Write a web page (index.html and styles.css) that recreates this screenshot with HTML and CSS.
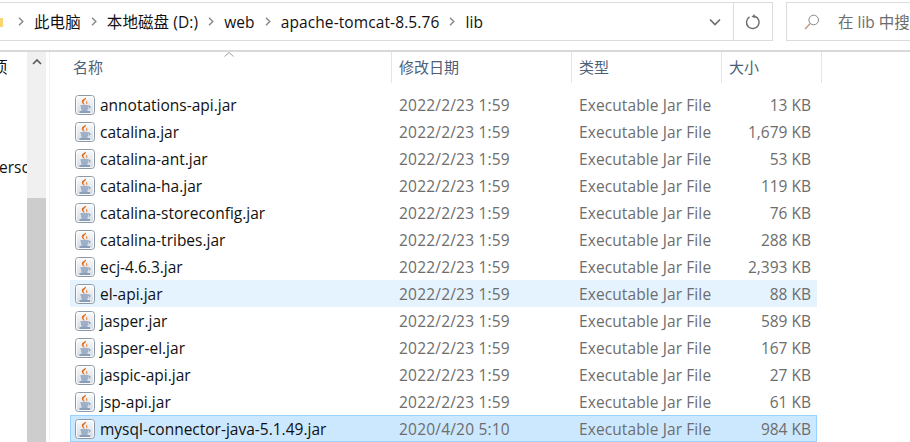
FILE: index.html
```html
<!DOCTYPE html>
<html lang="zh-CN">
<head>
    <meta charset="UTF-8">
    <title>lib</title>
    <link rel="stylesheet" href="styles.css">
</head>
<body>
    <svg class="defs" width="0" height="0">
        <defs>
            <linearGradient id="jarBg" x1="0" y1="0" x2="0" y2="1">
                <stop offset="0" stop-color="#fbfcfd"/>
                <stop offset="1" stop-color="#d3dae2"/>
            </linearGradient>
            <symbol id="jar" viewBox="0 0 20 20">
                <rect x="0.5" y="0.5" width="19" height="19" rx="3" fill="url(#jarBg)" stroke="#8c98a5"/>
                <rect x="1.500" y="1.500" width="17" height="17" rx="2" fill="none" stroke="#fff" stroke-opacity=".8"/>
                <path d="M10.800 2.500c1.200 2.100-3 3.100-2.200 5.300.3.900 1.100 1.500 1.400 2.400-2.100-1-3.800-2.600-3-4.600.6-1.400 3-1.800 3.800-3.100z" fill="#df6a1c"/>
                <path d="M12.600 5.300c-1.500.9-2.100 1.700-1.400 3 .2.400.4.800.3 1.200 1.100-.7 1.200-1.600.6-2.600-.3-.6 0-1.100.5-1.600z" fill="#e98a45"/>
                <path d="M5.500 11h8M6 13h7M6.500 15h6" stroke="#5b7ba6" stroke-width="1" fill="none"/>
                <path d="M13.500 11.100c2-.4 2.300 1.700.2 2.100" stroke="#5b7ba6" stroke-width=".9" fill="none"/>
                <path d="M4.500 17h10.500" stroke="#3f5f8c" stroke-width="1"/>
            </symbol>
            <symbol id="crumb" viewBox="0 0 6 9">
                <path d="M1 .7l3.800 3.800-3.800 3.800" fill="none" stroke="#8a8a8a" stroke-width="1.500"/>
            </symbol>
        </defs>
    </svg>

    <div class="toolbar">
        <div class="address">
            <span class="folder"></span>
            <div class="crumbs">
                <svg class="crumb"><use href="#crumb"/></svg>
                <span>此电脑</span>
                <svg class="crumb"><use href="#crumb"/></svg>
                <span>本地磁盘 (D:)</span>
                <svg class="crumb"><use href="#crumb"/></svg>
                <span>web</span>
                <svg class="crumb"><use href="#crumb"/></svg>
                <span>apache-tomcat-8.5.76</span>
                <svg class="crumb"><use href="#crumb"/></svg>
                <span>lib</span>
            </div>
            <svg class="dropdown" width="12" height="8" viewBox="0 0 12 8">
                <path d="M1 1.500l5 5 5-5" fill="none" stroke="#6b6b6b" stroke-width="1.600"/>
            </svg>
        </div>
        <div class="refresh">
            <svg width="16" height="16" viewBox="0 0 16 16">
                <path d="M9.800 2.300a6.300 6.300 0 1 1-5.300.6" fill="none" stroke="#707070" stroke-width="1.500"/>
                <path d="M9.800 0.200v4.300l-3.400-2.200z" fill="#707070" transform="rotate(-12 9 2)"/>
            </svg>
        </div>
        <div class="search">
            <svg class="search-ico" width="16" height="16" viewBox="0 0 16 16">
                <circle cx="9.700" cy="6" r="4.800" fill="none" stroke="#8a8a8a" stroke-width="1"/>
                <path d="M6.300 9.500l-5.300 5.500" stroke="#c09070" stroke-width="1.200"/>
            </svg>
            <span>在 lib 中搜索</span>
        </div>
    </div>

    <div class="main">
        <div class="sidebar">
            <div class="side-a">项</div>
            <div class="side-b">ersc</div>
        </div>
        <div class="scrollbar">
            <svg width="10" height="6" viewBox="0 0 10 6">
                <path d="M1 5l4-4 4 4" fill="none" stroke="#555" stroke-width="1.600"/>
            </svg>
            <div class="thumb"></div>
        </div>
        <div class="files">
            <div class="head">
                <svg class="sort" width="10" height="5" viewBox="0 0 10 5">
                    <path d="M.5 4.500l4.500-4 4.500 4" fill="none" stroke="#a0a0a0"/>
                </svg>
                <div class="col name">名称</div>
                <div class="col">修改日期</div>
                <div class="col">类型</div>
                <div class="col">大小</div>
            </div>
            <div class="rows">
                <div class="row"><div class="fname"><svg class="ico"><use href="#jar"/></svg>annotations-api.jar</div><div class="date">2022/2/23 1:59</div><div class="type">Executable Jar File</div><div class="size">13 KB</div></div>
                <div class="row"><div class="fname"><svg class="ico"><use href="#jar"/></svg>catalina.jar</div><div class="date">2022/2/23 1:59</div><div class="type">Executable Jar File</div><div class="size">1,679 KB</div></div>
                <div class="row"><div class="fname"><svg class="ico"><use href="#jar"/></svg>catalina-ant.jar</div><div class="date">2022/2/23 1:59</div><div class="type">Executable Jar File</div><div class="size">53 KB</div></div>
                <div class="row"><div class="fname"><svg class="ico"><use href="#jar"/></svg>catalina-ha.jar</div><div class="date">2022/2/23 1:59</div><div class="type">Executable Jar File</div><div class="size">119 KB</div></div>
                <div class="row"><div class="fname"><svg class="ico"><use href="#jar"/></svg>catalina-storeconfig.jar</div><div class="date">2022/2/23 1:59</div><div class="type">Executable Jar File</div><div class="size">76 KB</div></div>
                <div class="row"><div class="fname"><svg class="ico"><use href="#jar"/></svg>catalina-tribes.jar</div><div class="date">2022/2/23 1:59</div><div class="type">Executable Jar File</div><div class="size">288 KB</div></div>
                <div class="row"><div class="fname"><svg class="ico"><use href="#jar"/></svg>ecj-4.6.3.jar</div><div class="date">2022/2/23 1:59</div><div class="type">Executable Jar File</div><div class="size">2,393 KB</div></div>
                <div class="row hover"><div class="fname"><svg class="ico"><use href="#jar"/></svg>el-api.jar</div><div class="date">2022/2/23 1:59</div><div class="type">Executable Jar File</div><div class="size">88 KB</div></div>
                <div class="row"><div class="fname"><svg class="ico"><use href="#jar"/></svg>jasper.jar</div><div class="date">2022/2/23 1:59</div><div class="type">Executable Jar File</div><div class="size">589 KB</div></div>
                <div class="row"><div class="fname"><svg class="ico"><use href="#jar"/></svg>jasper-el.jar</div><div class="date">2022/2/23 1:59</div><div class="type">Executable Jar File</div><div class="size">167 KB</div></div>
                <div class="row"><div class="fname"><svg class="ico"><use href="#jar"/></svg>jaspic-api.jar</div><div class="date">2022/2/23 1:59</div><div class="type">Executable Jar File</div><div class="size">27 KB</div></div>
                <div class="row"><div class="fname"><svg class="ico"><use href="#jar"/></svg>jsp-api.jar</div><div class="date">2022/2/23 1:59</div><div class="type">Executable Jar File</div><div class="size">61 KB</div></div>
                <div class="row selected"><div class="fname"><svg class="ico"><use href="#jar"/></svg>mysql-connector-java-5.1.49.jar</div><div class="date">2020/4/20 5:10</div><div class="type">Executable Jar File</div><div class="size">984 KB</div></div>
            </div>
        </div>
    </div>
</body>
</html>
```

FILE: styles.css
```css
body {
    margin: 0;
    width: 910px;
    height: 442px;
    overflow: hidden;
    background: #fff;
    font-family: "Open Sans", "Noto Sans CJK SC", sans-serif;
    font-size: 15.5px;
    color: #111;
}

.defs {
    position: absolute;
}

/* TOOLBAR */
.toolbar {
    display: flex;
    height: 52px;
    box-sizing: border-box;
    padding-top: 2px;
    border-bottom: 2px solid #d9d9d9;
}

.address {
    display: flex;
    align-items: center;
    width: 734px;
    height: 39px;
    box-sizing: border-box;
    border: 1.5px solid #dcdcdc;
    border-left: none;
}

.folder {
    width: 3px;
    height: 9px;
    margin-top: 1px;
    background: #f7d674;
}

.crumbs {
    display: flex;
    align-items: center;
    flex: 1;
    padding-left: 15px;
    gap: 10px;
    letter-spacing: .1px;
    white-space: nowrap;
}

.crumb {
    width: 6px;
    height: 9px;
    flex: none;
}

.dropdown {
    margin-right: 12px;
}

.refresh {
    display: flex;
    align-items: center;
    justify-content: center;
    width: 39px;
    height: 39px;
    box-sizing: border-box;
    border: 1.5px solid #dcdcdc;
    border-left: none;
}

.search {
    display: flex;
    align-items: center;
    gap: 18px;
    flex: 1;
    min-width: 0;
    height: 39px;
    box-sizing: border-box;
    margin-left: 13px;
    padding-left: 17px;
    border: 1.5px solid #dcdcdc;
    border-right: none;
    color: #6d6d6d;
    white-space: nowrap;
    overflow: hidden;
}

.search-ico {
    flex: none;
}

/* MAIN AREA */
.main {
    display: flex;
    height: 390px;
}

.sidebar {
    width: 27px;
    overflow: hidden;
    white-space: nowrap;
}

.side-a {
    margin: 2px 0 0 -8px;
    height: 100px;
    line-height: 26px;
}

.side-b {
    margin-left: -1px;
    line-height: 26px;
}

.scrollbar {
    display: flex;
    flex-direction: column;
    align-items: center;
    width: 19px;
    background: #f0f0f0;
    padding-top: 7px;
    box-sizing: border-box;
}

.thumb {
    align-self: stretch;
    flex: 1;
    margin-top: 133px;
    background: #cdcdcd;
}

.files {
    position: relative;
    flex: 1;
    margin-left: 3px;
    border-left: 1px solid #f2f2f2;
}

.sort {
    position: absolute;
    left: 174px;
    top: 0;
}

.head {
    display: grid;
    grid-template-columns: 342px 180px 150px 100px;
    height: 31px;
}

.col {
    display: flex;
    align-items: center;
    padding: 0 0 2px 7px;
    border-right: 1px solid #e5e5e5;
    font-size: 15px;
    color: #4c607a;
}

.col.name {
    padding-left: 23px;
}

.rows {
    padding: 8px 0 0 20px;
}

.row {
    display: grid;
    grid-template-columns: 321px 180px 150px 96px;
    align-items: center;
    width: 747px;
    height: 27px;
    box-sizing: border-box;
    color: #6d6d6d;
}

.row > div {
    padding-left: 8px;
}

.row .fname {
    display: flex;
    align-items: center;
    gap: 5px;
    padding-left: 5px;
    color: #111;
}

.row .date {
    letter-spacing: .2px;
}

.row .type {
    letter-spacing: .1px;
}

.ico {
    width: 20px;
    height: 20px;
    flex: none;
}

.row .size {
    padding: 0 6px 0 0;
    text-align: right;
}

.hover {
    background: #e5f3ff;
}

.selected {
    background: #cce8ff;
    box-shadow: inset 0 0 0 1px #99d1ff;
}
```
